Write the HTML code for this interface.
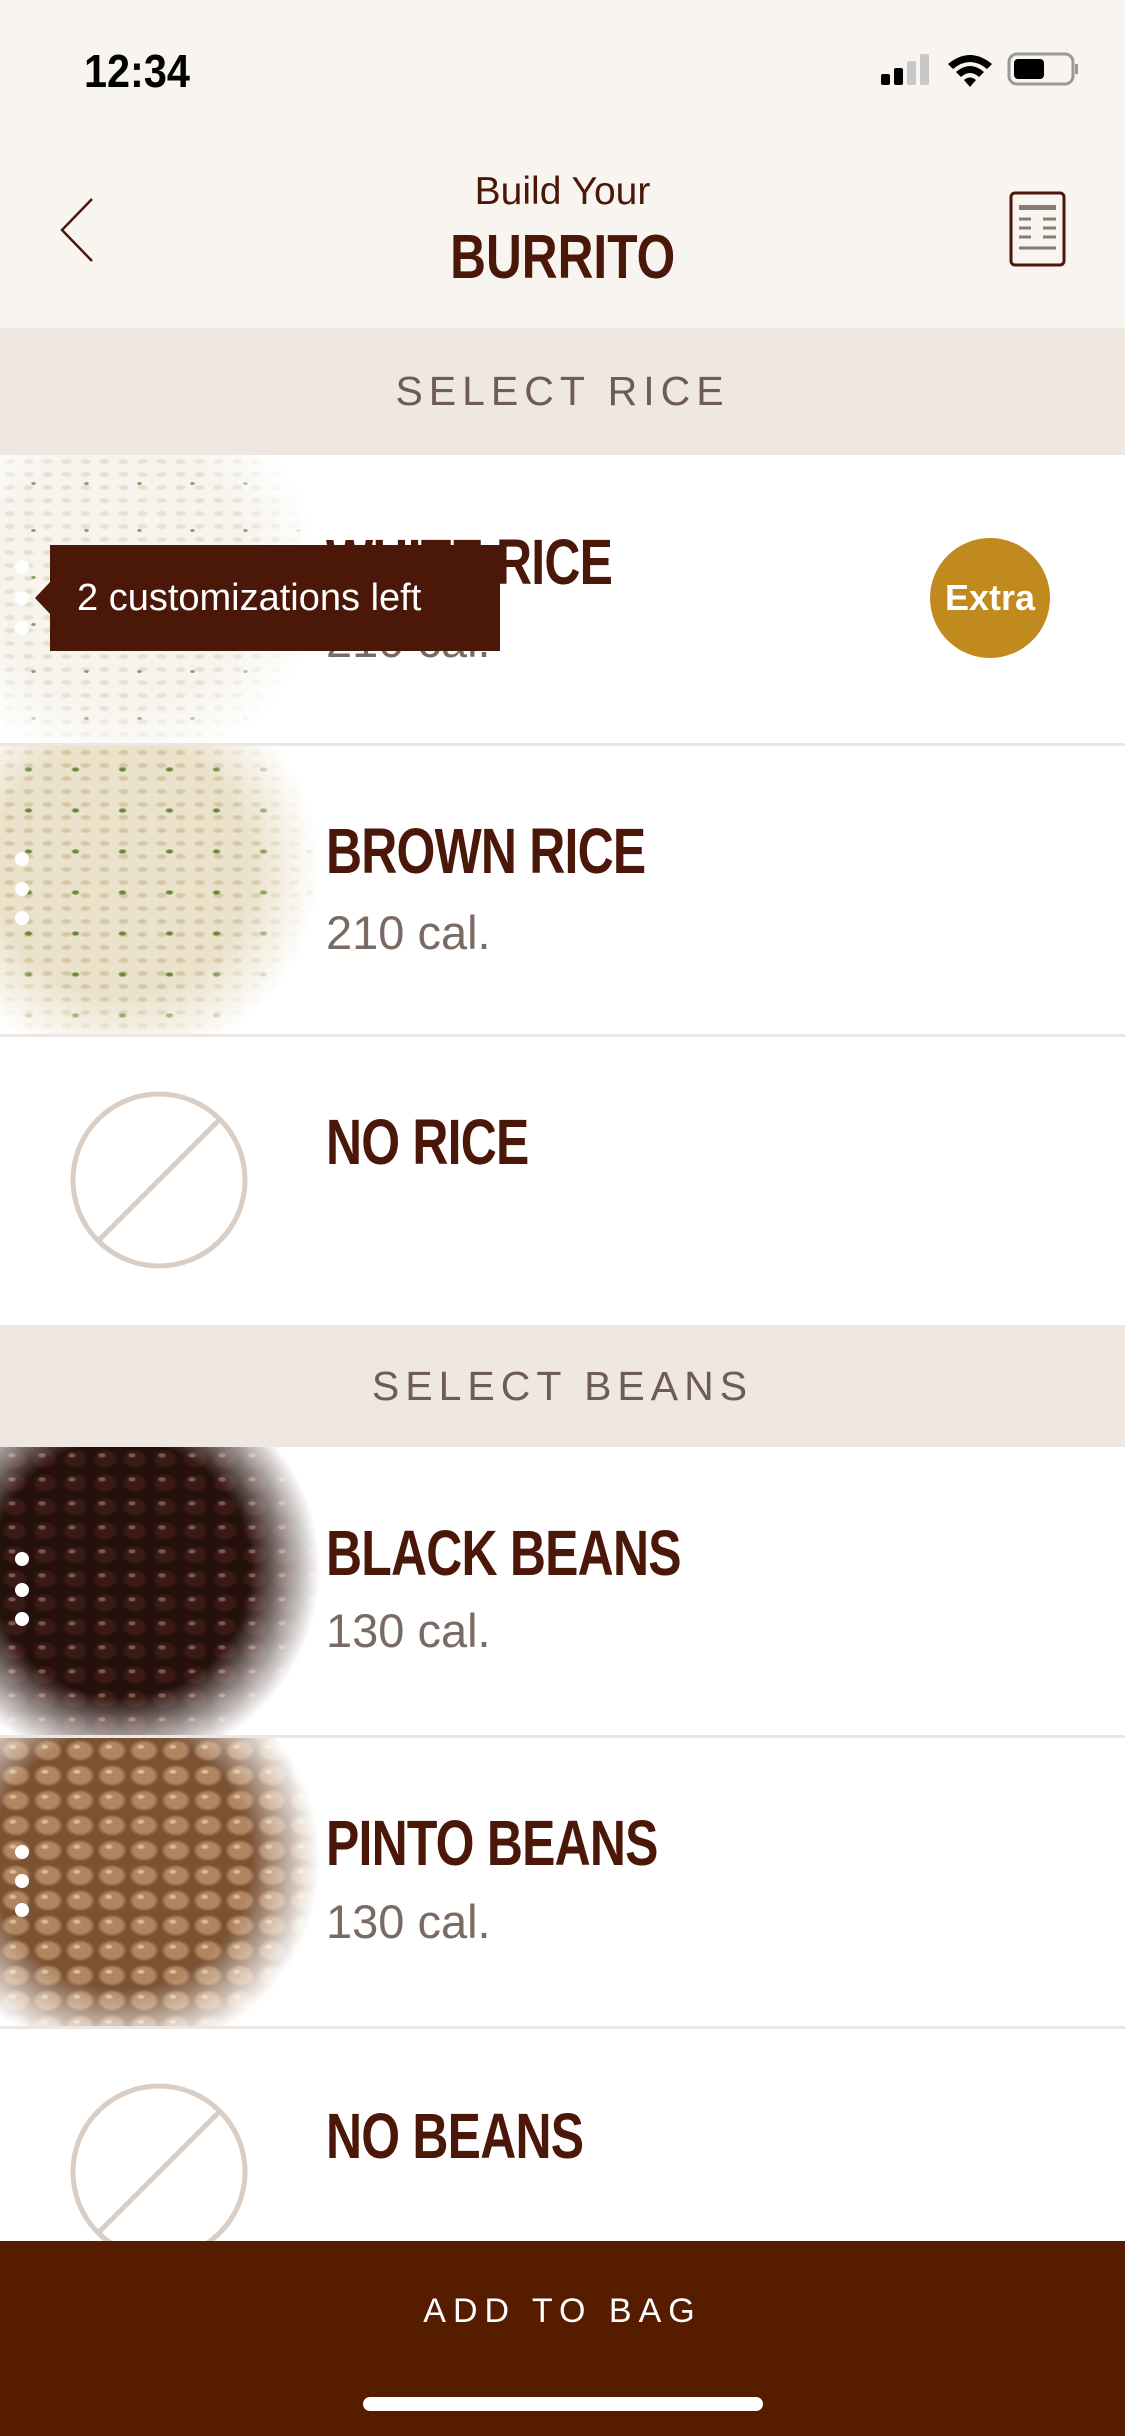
<!DOCTYPE html>
<html><head><meta charset="utf-8"><style>
*{margin:0;padding:0;box-sizing:border-box}
body{width:1125px;height:2436px;position:relative;overflow:hidden;background:#fff;font-family:"Liberation Sans",sans-serif}
.a{position:absolute}
.band{position:absolute;left:0;width:1125px;background:#efe7e1;color:#6e5c55;font-size:41px;letter-spacing:6px;text-align:center}
.row{position:absolute;left:0;width:1125px;background:#fff;border-bottom:3px solid #ece7e3;overflow:hidden}
.t{position:absolute;left:326px;font-weight:bold;font-size:64px;color:#4a1708;letter-spacing:-1px;line-height:1;transform:scaleX(0.78);transform-origin:0 0;white-space:nowrap}
.c{position:absolute;left:326px;font-size:47px;color:#7a6a64;line-height:1}
.dot{position:absolute;left:15px;width:14px;height:14px;border-radius:50%;background:#fff}
.img{position:absolute;left:0;top:0;width:320px;height:290px;-webkit-mask-image:radial-gradient(ellipse 62% 68% at 38% 42%,#000 65%,transparent 100%);mask-image:radial-gradient(ellipse 62% 68% at 38% 42%,#000 65%,transparent 100%)}
</style></head><body>
<div class="a" style="left:0;top:0;width:1125px;height:328px;background:#f8f5f1"></div>
<div class="a" style="left:84px;top:44px;font-size:46px;font-weight:bold;color:#000;transform:scaleX(0.9);transform-origin:0 0">12:34</div>
<svg class="a" style="left:878px;top:50px" width="200" height="40" viewBox="0 0 200 40">
<rect x="3" y="24" width="9" height="11" rx="2" fill="#000"/><rect x="16" y="18" width="9" height="17" rx="2" fill="#000"/><rect x="29" y="11" width="9" height="24" rx="2" fill="#c8c8c8"/><rect x="42" y="4" width="9" height="31" rx="2" fill="#c8c8c8"/>
<path d="M70 14 Q92 -4 114 14 L109 19 Q92 5 75 19Z" fill="#000"/><path d="M78 22 Q92 10 106 22 L101 27 Q92 19 83 27Z" fill="#000"/><path d="M86 30 Q92 25 98 30 L92 37Z" fill="#000"/>
<rect x="131" y="4" width="64" height="30" rx="8" fill="none" stroke="#999" stroke-width="3"/><rect x="136" y="9" width="30" height="20" rx="4" fill="#000"/><rect x="197" y="14" width="3" height="10" fill="#999"/>
</svg>
<svg class="a" style="left:58px;top:197px" width="40" height="68"><path d="M34 2 L4 33 L34 64" fill="none" stroke="#4a1708" stroke-width="2.5"/></svg>
<div class="a" style="left:0;top:170px;width:1125px;text-align:center;font-size:39px;color:#4a1708">Build Your</div>
<div class="a" style="left:0;top:222px;width:1125px;text-align:center"><span style="display:inline-block;font-weight:bold;font-size:62px;color:#4a1708;transform:scaleX(0.8)">BURRITO</span></div>
<svg class="a" style="left:1009px;top:191px" width="58" height="77"><rect x="2" y="2" width="53" height="72" rx="4" fill="none" stroke="#4a1708" stroke-width="3"/><rect x="10" y="14" width="37" height="5" fill="#8a7a72"/><path d="M10 28h12M34 28h13M10 37h12M34 37h13M10 46h12M34 46h13M10 57h37" stroke="#8a7a72" stroke-width="3"/></svg>

<div class="band" style="top:328px;height:127px;line-height:127px">SELECT RICE</div>

<div class="row" style="top:455px;height:291px">
<div class="img" style="background:radial-gradient(ellipse 3px 2px at 50% 50%,#8aa060 60%,transparent 90%) 7px 5px/53px 47px,radial-gradient(ellipse 8px 4px at 50% 50%,#e6e0d2 40%,transparent 80%) 0 0/19px 13px,#f7f4ee;"></div>
<div class="t" style="top:75px">WHITE RICE</div>
<div class="c" style="top:162px">210 cal.</div>
<div class="dot" style="top:105px"></div><div class="dot" style="top:136px"></div><div class="dot" style="top:166px"></div>
<div class="a" style="left:930px;top:83px;width:120px;height:120px;border-radius:50%;background:#c08a1e;color:#fff;font-weight:bold;font-size:36px;text-align:center;line-height:120px">Extra</div>
</div>
<div class="a" style="left:50px;top:545px;width:450px;height:106px;background:#4a1708;color:#fff;font-size:38px;line-height:106px;padding-left:27px">2 customizations left</div>
<div class="a" style="left:35px;top:581px;width:0;height:0;border-top:17px solid transparent;border-bottom:17px solid transparent;border-right:16px solid #4a1708"></div>

<div class="row" style="top:746px;height:291px">
<div class="img" style="background:radial-gradient(ellipse 5px 3px at 50% 50%,#6a8a3a 50%,transparent 90%) 5px 3px/47px 41px,radial-gradient(ellipse 8px 4px at 50% 50%,#d5c7a4 40%,transparent 80%) 0 0/19px 13px,#ebe2cc;"></div>
<div class="t" style="top:73px">BROWN RICE</div>
<div class="c" style="top:163px">210 cal.</div>
<div class="dot" style="top:106px"></div><div class="dot" style="top:136px"></div><div class="dot" style="top:165px"></div>
</div>

<div class="row" style="top:1037px;height:288px;border-bottom:none">
<svg class="a" style="left:68px;top:52px" width="182" height="182"><circle cx="91" cy="91" r="86" fill="none" stroke="#d9cdc4" stroke-width="5"/><path d="M30 152 L152 30" stroke="#d9cdc4" stroke-width="5"/></svg>
<div class="t" style="top:73px">NO RICE</div>
</div>

<div class="band" style="top:1325px;height:122px;line-height:122px">SELECT BEANS</div>

<div class="row" style="top:1447px;height:291px">
<div class="img" style="background:radial-gradient(ellipse 5px 3px at 40% 35%,#7a5a50 50%,transparent 90%) 0 0/30px 24px,radial-gradient(ellipse 13px 10px at 50% 50%,#3a1a14 70%,#24100c 100%) 0 0/30px 24px;"></div>
<div class="t" style="top:74px">BLACK BEANS</div>
<div class="c" style="top:160px">130 cal.</div>
<div class="dot" style="top:105px"></div><div class="dot" style="top:136px"></div><div class="dot" style="top:165px"></div>
</div>

<div class="row" style="top:1738px;height:291px">
<div class="img" style="background:radial-gradient(ellipse 5px 3px at 40% 35%,#d8b896 50%,transparent 90%) 0 0/32px 25px,radial-gradient(ellipse 15px 11px at 50% 50%,#b08560 70%,#7a5234 100%) 0 0/32px 25px;"></div>
<div class="t" style="top:73px">PINTO BEANS</div>
<div class="c" style="top:160px">130 cal.</div>
<div class="dot" style="top:107px"></div><div class="dot" style="top:136px"></div><div class="dot" style="top:165px"></div>
</div>

<div class="row" style="top:2029px;height:300px;border-bottom:none">
<svg class="a" style="left:68px;top:52px" width="182" height="182"><circle cx="91" cy="91" r="86" fill="none" stroke="#d9cdc4" stroke-width="5"/><path d="M30 152 L152 30" stroke="#d9cdc4" stroke-width="5"/></svg>
<div class="t" style="top:75px">NO BEANS</div>
</div>

<div class="a" style="left:0;top:2241px;width:1125px;height:195px;background:#561c00"></div>
<div class="a" style="left:0;top:2292px;width:1125px;text-align:center;color:#fff;font-size:34px;letter-spacing:7px">ADD TO BAG</div>
<div class="a" style="left:363px;top:2397px;width:400px;height:14px;border-radius:7px;background:#fff"></div>
</body></html>
